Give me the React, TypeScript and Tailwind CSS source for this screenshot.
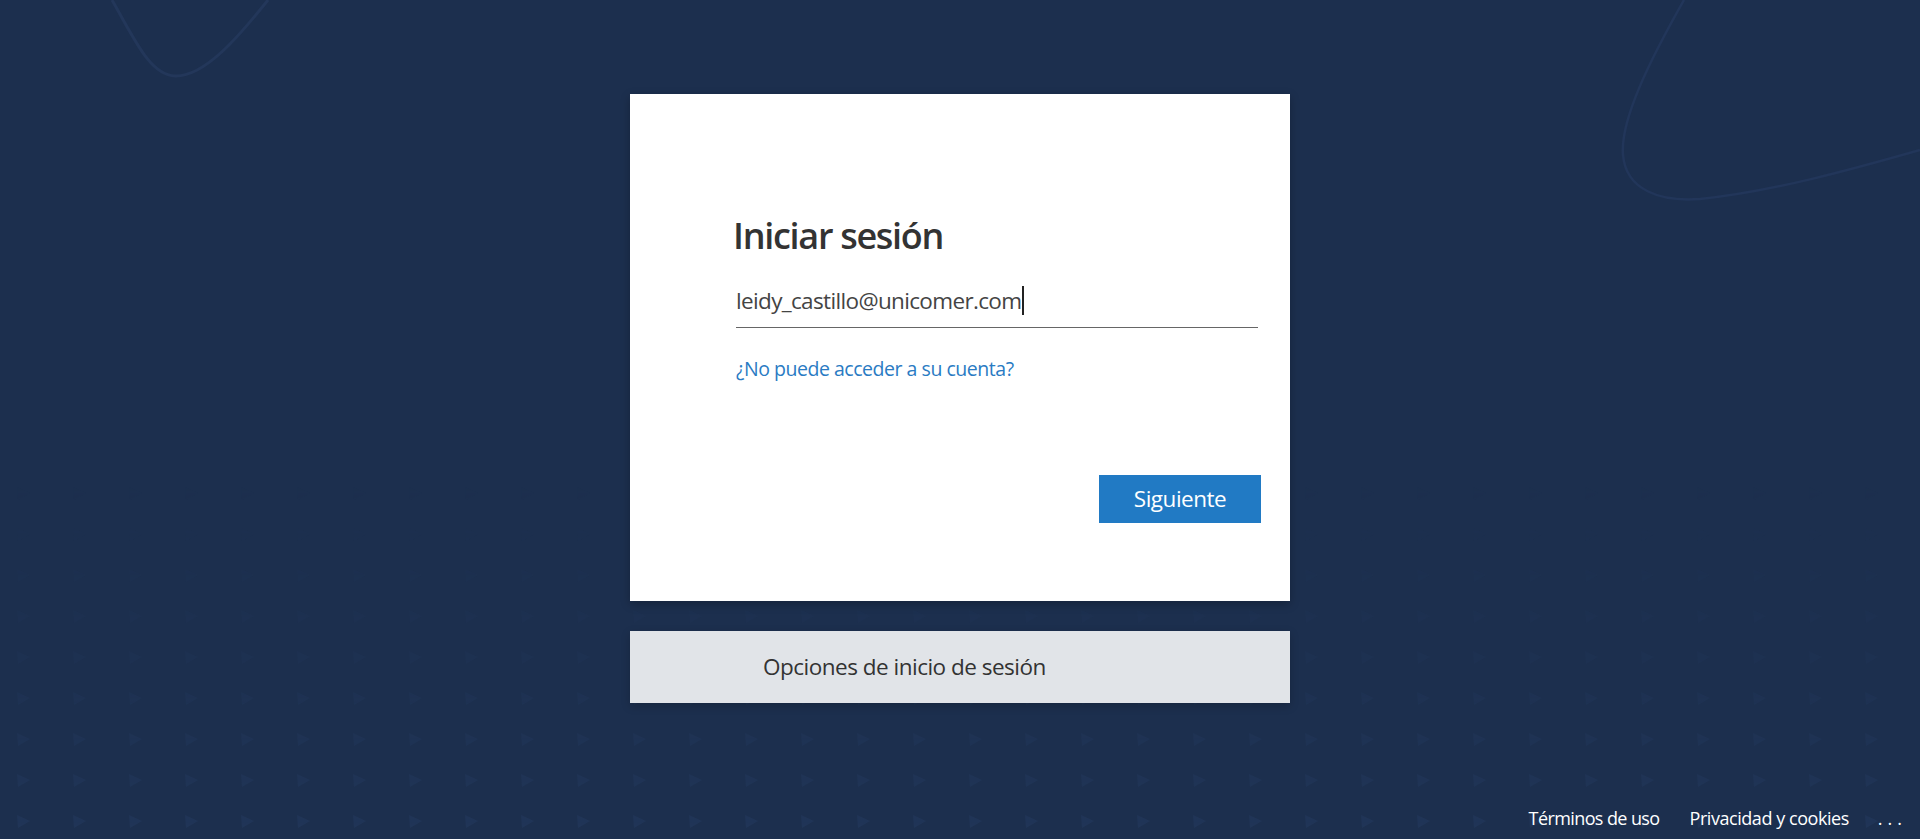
import React from "react";

const FONT = "font-['Segoe_UI','Open_Sans',sans-serif]";

const Backdrop = () => (
  <svg
    className="absolute inset-0 w-full h-full pointer-events-none"
    viewBox="0 0 1920 839"
    preserveAspectRatio="none"
  >
    <defs>
      <pattern id="tri" x="16" y="526" width="56" height="41" patternUnits="userSpaceOnUse">
        <path d="M1 2 L14 8 L2 15 Z" fill="#213659" />
      </pattern>
      <linearGradient id="fade" x1="0" y1="0" x2="0" y2="1">
        <stop offset="0" stopColor="white" stopOpacity="0" />
        <stop offset="0.5" stopColor="white" stopOpacity="0.3" />
        <stop offset="1" stopColor="white" stopOpacity="0.85" />
      </linearGradient>
      <mask id="fadeMask">
        <rect x="0" y="480" width="1920" height="359" fill="url(#fade)" />
      </mask>
    </defs>
    <rect x="0" y="480" width="1920" height="359" fill="url(#tri)" mask="url(#fadeMask)" />
    <path
      d="M112 0 C 135 40, 150 75, 175 76 C 205 77, 240 35, 268 0"
      fill="none"
      stroke="#23375a"
      strokeWidth="3"
    />
    <path
      d="M1684 0 C 1650 60, 1620 120, 1623 155 C 1626 190, 1660 202, 1700 199 C 1770 192, 1850 170, 1920 150"
      fill="none"
      stroke="#22365a"
      strokeWidth="2.5"
    />
  </svg>
);

function App() {
  return (
    <div className={`relative min-h-screen h-[839px] overflow-hidden bg-[#1c2f4e] flex flex-col ${FONT}`}>
      <Backdrop />

      <div className="relative flex flex-col items-center pt-[94px]">
        {/* sign-in card */}
        <div className="w-[660px] h-[507px] bg-white shadow-[0_3px_9px_rgba(0,0,0,0.25)] pt-[66px] pl-[106px] pr-[29px] flex flex-col">
          <div className="h-[36px]" />
          <h1 className="mt-[19px] -ml-[3px] text-[36px] leading-[42px] font-semibold text-[#333333] tracking-[-1.3px]">
            Iniciar sesión
          </h1>
          <div className="mt-[17px] w-[522px] h-[54px] border-b border-[#666666] flex items-center text-[22.5px] text-[#444444] tracking-[-0.65px]">
            <span>leidy_castillo@unicomer.com</span>
            <span className="ml-[1px] w-[2px] h-[29px] bg-[#222222]" />
          </div>
          <a
            href="#"
            className="mt-[26px] self-start text-[19.5px] leading-[30px] text-[#2a7bc3] tracking-[-0.47px]"
          >
            ¿No puede acceder a su cuenta?
          </a>
          <div className="mt-auto mb-[78px] flex justify-end">
            <button className="w-[162px] h-[48px] bg-[#217ac4] text-white text-[22.5px] tracking-[-0.5px]">
              Siguiente
            </button>
          </div>
        </div>

        {/* sign-in options */}
        <button className="mt-[30px] w-[660px] h-[72px] bg-[#e1e4e8] shadow-[0_3px_9px_rgba(0,0,0,0.2)] flex items-center pl-[133px] text-[22.5px] text-[#333333] tracking-[-0.5px]">
          Opciones de inicio de sesión
        </button>
      </div>

      {/* footer */}
      <div className="relative mt-auto h-[42px] flex items-center justify-end pr-[17px] text-[18px] text-white">
        <a href="#" className="mr-[30px] tracking-[-0.6px]">Términos de uso</a>
        <a href="#" className="mr-[29px] tracking-[-0.45px]">Privacidad y cookies</a>
        <a href="#" className="tracking-[5px] -mr-[4px]">...</a>
      </div>
    </div>
  );
}

export default App;
